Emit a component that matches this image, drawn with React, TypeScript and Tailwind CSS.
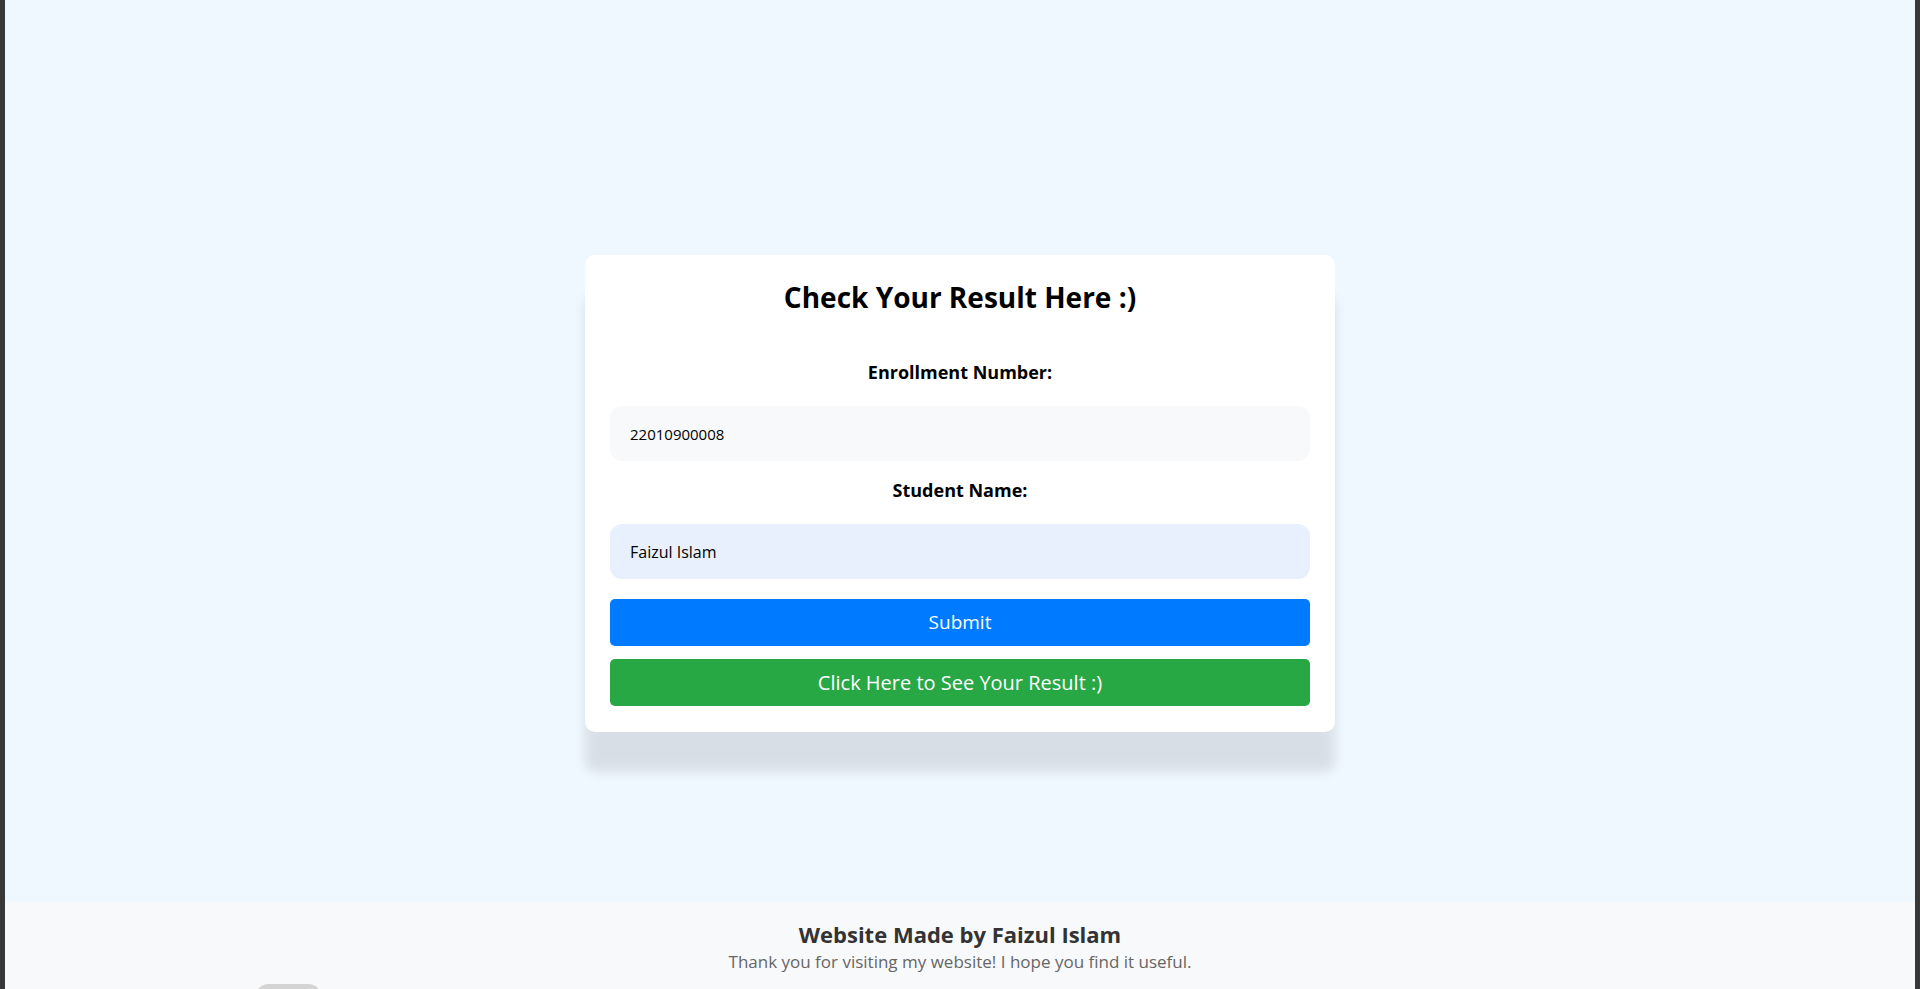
import React from 'react';

const font = { fontFamily: '"Trebuchet MS", "Open Sans", Lato, sans-serif' };

const App = () => {
  return (
    <div className="h-[989px] overflow-hidden bg-[#383838] px-[5px]" style={font}>
      <div className="h-full flex flex-col bg-[#f8f9fa]">
        {/* Main area */}
        <main className="h-[902px] shrink-0 bg-[#f0f8ff] flex justify-center pt-[255px]">
          <div className="w-[750px] h-fit bg-white rounded-[10px] px-[25px] pt-[25px] pb-[26px] shadow-[0_40px_12px_rgba(0,0,0,0.1)] flex flex-col">
            <h2 className="text-[28px] leading-[34px] font-bold text-black text-center">
              Check Your Result Here :)
            </h2>

            <label className="mt-[47px] text-[18px] leading-[22px] font-bold text-black text-center">
              Enrollment Number:
            </label>
            <input
              type="text"
              defaultValue="22010900008"
              className="mt-[23px] h-[55px] w-full rounded-[12px] bg-[#f8f9fa] px-[20px] text-[15px] text-black outline-none"
            />

            <label className="mt-[18px] text-[18px] leading-[22px] font-bold text-black text-center">
              Student Name:
            </label>
            <input
              type="text"
              defaultValue="Faizul Islam"
              className="mt-[23px] h-[55px] w-full rounded-[12px] bg-[#e8f0fe] px-[20px] text-[16px] text-black outline-none"
            />

            <button className="mt-[20px] h-[47px] w-full rounded-[5px] bg-[#007bff] text-white text-[19px]">
              Submit
            </button>
            <button className="mt-[13px] h-[47px] w-full rounded-[5px] bg-[#28a745] text-white text-[20px]">
              Click Here to See Your Result :)
            </button>
          </div>
        </main>

        {/* Footer */}
        <footer className="bg-[#f8f9fa] pt-[17px] text-center">
          <h3 className="text-[22px] leading-[30px] font-bold text-[#333333]">Website Made by Faizul Islam</h3>
          <p className="text-[17px] leading-[26px] text-[#666666]">
            Thank you for visiting my website! I hope you find it useful.
          </p>
          <div className="mt-[9px] ml-[250px] h-[20px] w-[67px] rounded-t-[14px] bg-[#d4d4d4]" />
        </footer>
      </div>
    </div>
  );
};

export default App;
